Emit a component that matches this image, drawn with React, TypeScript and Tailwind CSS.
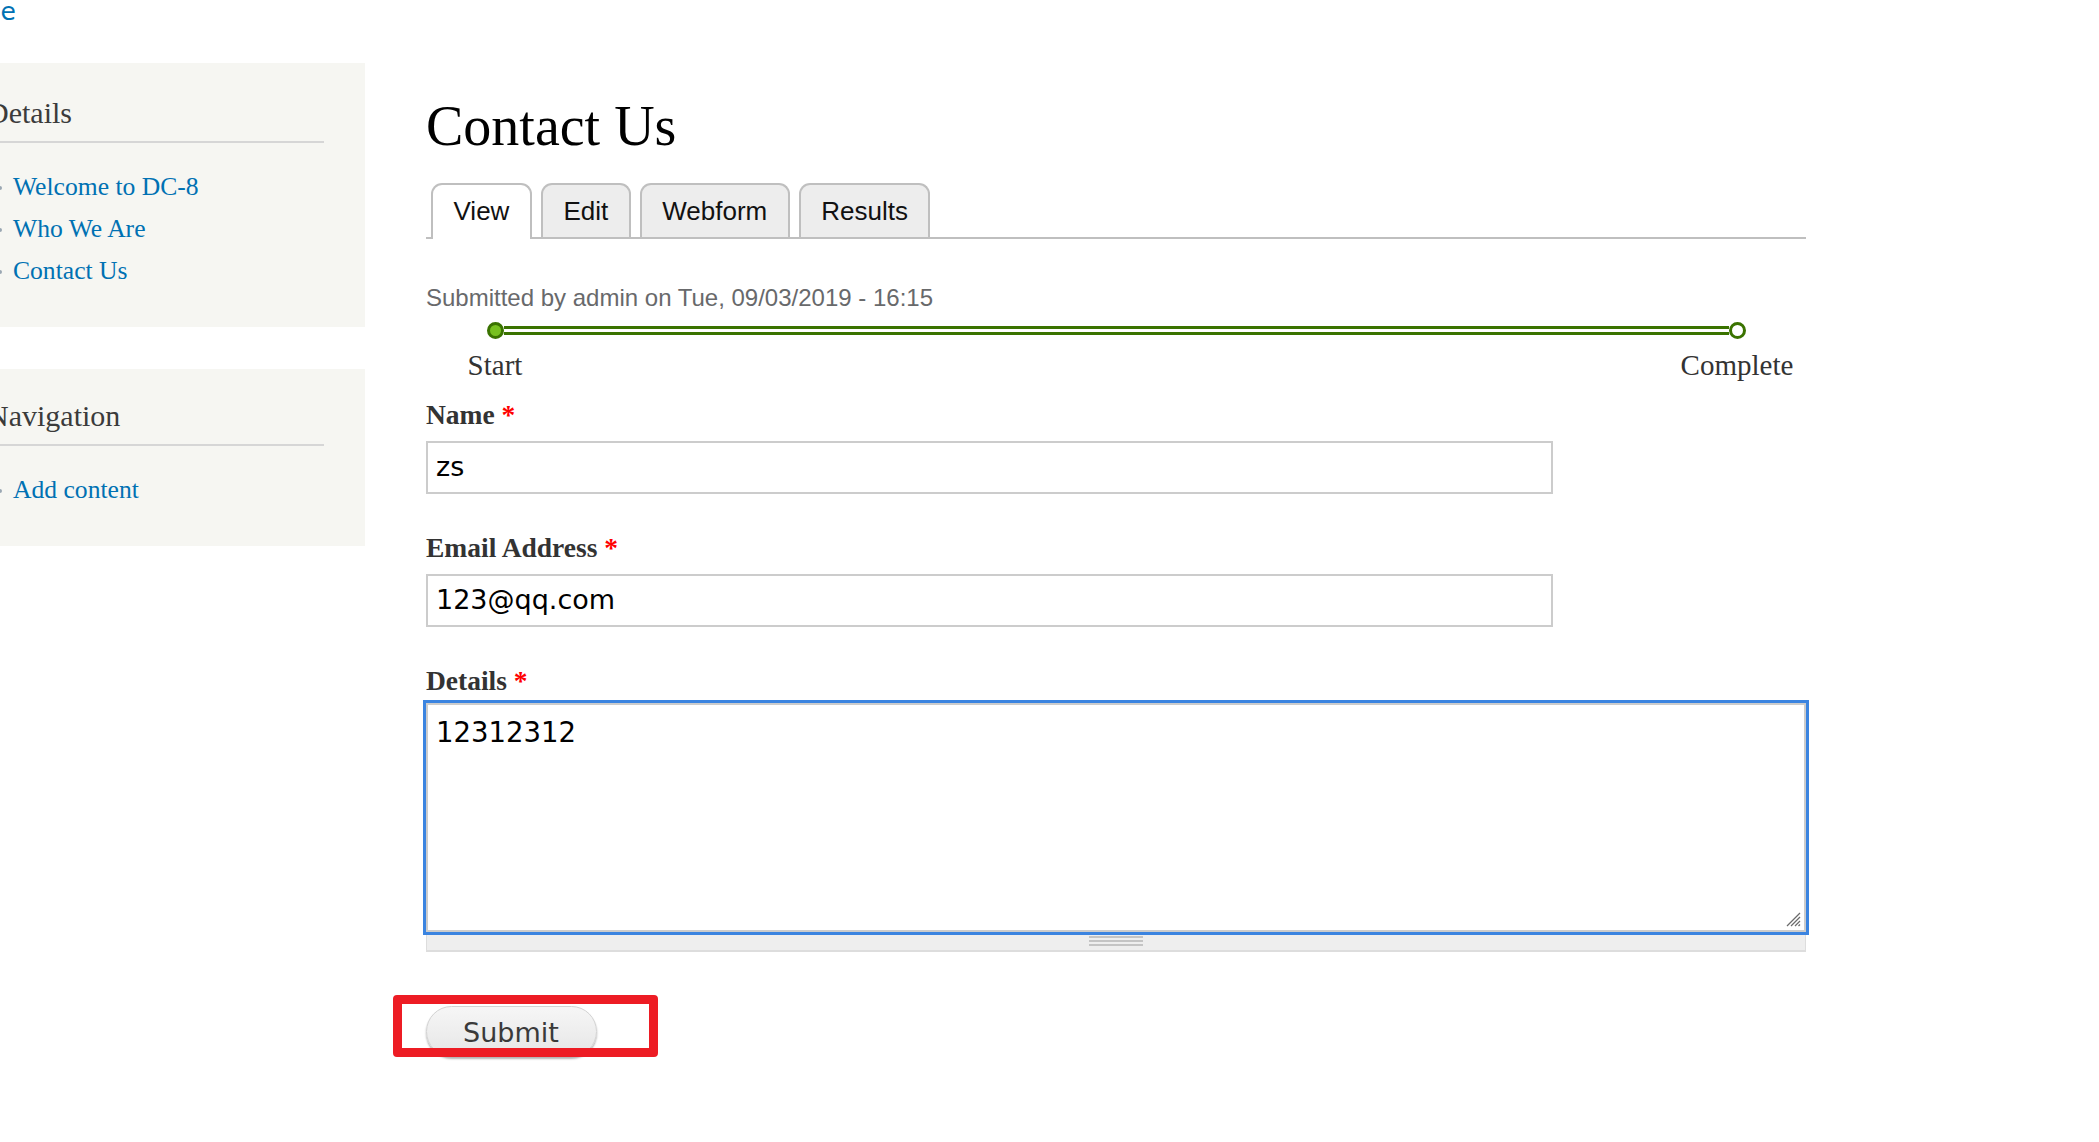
const serif = "font-['Liberation_Serif','Times_New_Roman',serif]";
const sans = "font-['Liberation_Sans',Arial,sans-serif]";
const dejavu = "font-['DejaVu_Sans',sans-serif]";

function SidebarBlock({ title, links, top }: { title: string; links: string[]; top: string }) {
  return (
    <div className={`bg-[#f6f6f2] pl-[27px] pr-[41px] pb-[35.5px] ${top}`}>
      <h2
        className={`${serif} text-[30px] leading-[36px] text-[#3b3b3b] pb-[10px] border-b-2 border-[#d6d6d6]`}
      >
        {title}
      </h2>
      <ul className="mt-[22.5px] pl-[26px]">
        {links.map((l) => (
          <li key={l} className={`${serif} relative text-[25.6px] leading-[42px]`}>
            <span className="absolute -left-[15px] top-[20px] w-[4px] h-[4px] rounded-full bg-[#9aa7b3]" />
            <a className="text-[#0071b3]">{l}</a>
          </li>
        ))}
      </ul>
    </div>
  );
}

function Tab({ label, active }: { label: string; active?: boolean }) {
  return (
    <div
      className={
        active
          ? `${sans} h-[56px] -mb-[2px] pb-[2px] flex items-center px-[20.5px] border-2 border-b-0 border-[#bfbfbf] rounded-t-[11px] bg-white text-[26px] text-[#111]`
          : `${sans} h-[54px] flex items-center px-[20.5px] border-2 border-b-0 border-[#bfbfbf] rounded-t-[11px] bg-[#ededed] text-[26px] text-[#111]`
      }
    >
      {label}
    </div>
  );
}

function Label({ text }: { text: string }) {
  return (
    <div className={`${serif} font-bold text-[27.5px] leading-[30px] text-[#333]`}>
      {text} <span className="text-[#ff0000]">*</span>
    </div>
  );
}

function TextField({ value }: { value: string }) {
  return (
    <div
      className={`${dejavu} mt-[11px] h-[53px] w-[1127px] border-2 border-[#cccccc] bg-white px-[8px] flex items-center text-[27px] text-black`}
    >
      {value}
    </div>
  );
}

export default function App() {
  return (
    <div className="min-h-screen w-full bg-white overflow-hidden">
      <div className="h-[24px]">
        <a className={`${dejavu} block -ml-[58px] text-[25px] leading-[24px] text-[#0071b3]`}>Home</a>
      </div>

      <div className="flex items-start">
        {/* Sidebar */}
        <aside className="-ml-[40px] w-[405px] shrink-0 mt-[39px] flex flex-col gap-[42px]">
          <SidebarBlock top="pt-[32px]" title="Details" links={["Welcome to DC-8", "Who We Are", "Contact Us"]} />
          <SidebarBlock top="pt-[29px]" title="Navigation" links={["Add content"]} />
        </aside>

        {/* Main */}
        <main className="ml-[61px] w-[1380px] shrink-0">
          <h1 className={`${serif} mt-[74px] text-[56px] leading-[56px] text-black`}>Contact Us</h1>

          <div className="mt-[29px] flex items-end gap-[9px] pl-[5px] border-b-2 border-[#bfbfbf]">
            <Tab label="View" active />
            <Tab label="Edit" />
            <Tab label="Webform" />
            <Tab label="Results" />
          </div>

          <p className={`${sans} mt-[45px] text-[24px] leading-[28px] text-[#68696b]`}>
            Submitted by admin on Tue, 09/03/2019 - 16:15
          </p>

          {/* Progress */}
          <div className="mt-[10px] flex items-center pl-[61px] pr-[60px]">
            <span className="w-[17px] h-[17px] shrink-0 rounded-full border-[3px] border-[#3a7300] bg-[#77c11f]" />
            <div className="flex-1 h-[9px] border-y-[3px] border-[#3a7300] bg-white" />
            <span className="w-[17px] h-[17px] shrink-0 rounded-full border-[3px] border-[#3a7300] bg-white" />
          </div>
          <div className={`${serif} mt-[10px] flex justify-between text-[29px] leading-[32px] text-[#333]`}>
            <span className="w-[138px] text-center">Start</span>
            <span className="w-[138px] text-center">Complete</span>
          </div>

          {/* Form */}
          <div className="mt-[19px]">
            <Label text="Name" />
            <TextField value="zs" />
          </div>
          <div className="mt-[39px]">
            <Label text="Email Address" />
            <TextField value="123@qq.com" />
          </div>
          <div className="mt-[39px]">
            <Label text="Details" />
            <div className="relative z-10 mt-[7px] h-[229px] border-2 border-[#cccccc] bg-white outline-[3px] outline-solid outline-[#3b84e0] px-[8px] pt-[12px]">
              <div className={`${dejavu} text-[27.5px] leading-[31px] text-black`}>12312312</div>
              <svg className="absolute right-[3px] bottom-[3px]" width="16" height="16" viewBox="0 0 16 16">
                <g stroke="#6b6b6b" strokeWidth="1.2">
                  <line x1="2" y1="15" x2="15" y2="2" />
                  <line x1="6" y1="15" x2="15" y2="6" />
                  <line x1="10" y1="15" x2="15" y2="10" />
                  <line x1="13.5" y1="15" x2="15" y2="13.5" />
                </g>
              </svg>
            </div>
            <div className="h-[20px] bg-[#eeeeee] border-x border-b-2 border-[#dddddd] flex justify-center pt-[4px]">
              <div className="w-[54px] flex flex-col gap-[2px]">
                <div className="h-[2px] bg-[#c4c4c4]" />
                <div className="h-[2px] bg-[#c4c4c4]" />
                <div className="h-[2px] bg-[#c4c4c4]" />
              </div>
            </div>
          </div>

          <div className="relative mt-[54px] w-[171px]">
            <button
              className={`${dejavu} h-[51px] w-[171px] rounded-full border border-[#d2d2d2] bg-gradient-to-b from-[#f6f6f6] to-[#e6e6e6] shadow-[0_2px_2px_rgba(0,0,0,0.3)] text-left pl-[36px] pt-[3px] text-[27px] text-[#3a3a3a]`}
            >
              Submit
            </button>
            <div className="absolute -left-[33px] -top-[11px] w-[265px] h-[62px] border-[9px] border-[#ed1c24] rounded-[4px]" />
          </div>
        </main>
      </div>
    </div>
  );
}
